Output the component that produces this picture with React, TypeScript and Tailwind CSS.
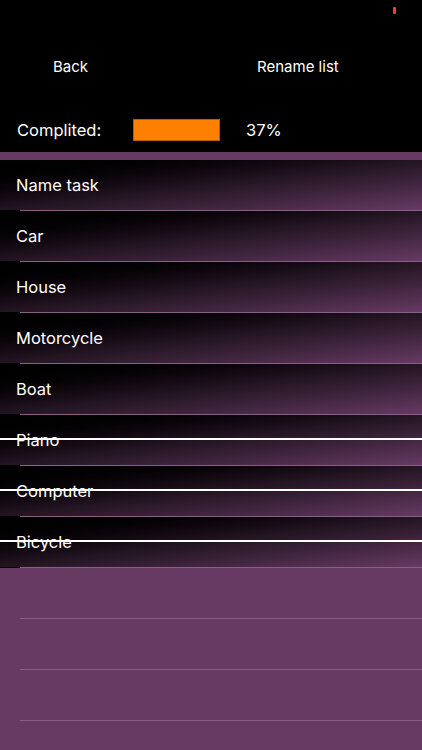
import React from 'react';

type Task = { name: string; done: boolean };

const tasks: Task[] = [
  { name: 'Name task', done: false },
  { name: 'Car', done: false },
  { name: 'House', done: false },
  { name: 'Motorcycle', done: false },
  { name: 'Boat', done: false },
  { name: 'Piano', done: true },
  { name: 'Computer', done: true },
  { name: 'Bicycle', done: true },
];

function TaskRow({ task }: { task: Task }) {
  return (
    <div className="relative">
      <div className="h-[50px] flex items-center px-4 bg-linear-to-br from-black via-[#231522] via-50% to-[#673a64]">
        <span className="text-[16.5px] text-white">{task.name}</span>
      </div>
      <div className="h-px ml-5 bg-[#866086]" />
      {task.done && (
        <div className="absolute left-0 right-0 top-[23px] h-[1.5px] bg-white" />
      )}
    </div>
  );
}

export default function App() {
  return (
    <div
      className="w-[422px] h-[750px] bg-[#673a64] overflow-hidden flex flex-col"
      style={{ fontFamily: 'Inter, "Liberation Sans", sans-serif' }}
    >
      <div className="bg-black h-[152px] flex flex-col">
        <div className="h-[45px] flex justify-end pr-[26px] pt-[7px]">
          <div className="w-[3px] h-[7px] bg-[#ff3b30] rounded-[1px]" />
        </div>
        <div className="h-[44px] flex items-center text-[15px] text-white">
          <span className="ml-[53px]">Back</span>
          <span className="ml-[169px]">Rename list</span>
        </div>
        <div className="mt-[29px] flex items-center text-[16.5px] text-white">
          <span className="ml-[17px] w-[116px]">Complited:</span>
          <div className="w-[87px] h-[22px] bg-[#ff8000] border border-[#b85c00]" />
          <span className="ml-[26px]">37%</span>
        </div>
      </div>
      <div className="h-[8px] bg-[#673a64]" />
      <div className="bg-black flex flex-col">
        {tasks.map((t) => (
          <TaskRow key={t.name} task={t} />
        ))}
      </div>
      <div className="flex flex-col">
        {[0, 1, 2].map((i) => (
          <div key={i}>
            <div className="h-[50px]" />
            <div className="h-px ml-5 bg-[#866086]" />
          </div>
        ))}
      </div>
    </div>
  );
}
